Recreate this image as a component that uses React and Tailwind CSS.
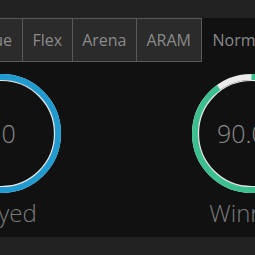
import React from 'react';

const tabs = ['Flex', 'Arena', 'ARAM'];

const stats = [
  { label: 'Played', value: '10', percent: 100, color: '#1f9bcf' },
  { label: 'Winrate', value: '90.0%', percent: 90, color: '#3cbf8e' },
];

// Ring with a thin inner line, like the stats cards
const StatRing = ({ value, percent, color }) => {
  const r = 56.5;
  const circ = 2 * Math.PI * r;
  return (
    <div className="relative w-[119px] h-[119px] flex items-center justify-center">
      <svg className="absolute inset-0" width="119" height="119" viewBox="0 0 119 119">
        <circle cx="59.5" cy="59.5" r={r} fill="none" stroke="#ececec" strokeWidth="6" />
        <circle
          cx="59.5"
          cy="59.5"
          r={r}
          fill="none"
          stroke={color}
          strokeWidth="6"
          strokeDasharray={`${(circ * percent) / 100} ${circ}`}
          transform="rotate(-90 59.5 59.5)"
        />
        <circle cx="59.5" cy="59.5" r="53" fill="none" stroke="#e6e6e6" strokeWidth="1.2" />
      </svg>
      <span className="relative text-[25px] font-light text-[#8a8a8a] leading-none">{value}</span>
    </div>
  );
};

const App = () => {
  return (
    <div className="w-full h-[255px] overflow-hidden bg-[#111111] font-['Open_Sans',sans-serif]">
      <div className="h-[18px] bg-[#222222]" />

      {/* Queue tabs */}
      <div className="flex bg-[#222222] text-[16px] text-[#8a8a8a]">
        <div className="w-[23px] h-11 shrink-0 flex justify-end items-center overflow-hidden bg-[#2b2b2b] border-y border-r border-[#5a5a5a]">
          <span className="whitespace-nowrap pr-[10px]">Solo Queue</span>
        </div>
        {tabs.map((tab) => (
          <div
            key={tab}
            className="h-11 shrink-0 flex items-center px-[9.5px] bg-[#2b2b2b] border-y border-r border-[#5a5a5a] whitespace-nowrap"
          >
            {tab}
          </div>
        ))}
        <div className="h-11 shrink-0 flex items-center px-[11px] bg-[#111111] whitespace-nowrap">Normal</div>
      </div>

      {/* Stats */}
      <div className="h-[175px] flex -ml-[123.5px] pt-3">
        {stats.map((s) => (
          <div key={s.label} className="w-[250px] shrink-0 flex flex-col items-center">
            <StatRing value={s.value} percent={s.percent} color={s.color} />
            <div className="mt-1 text-[24px] leading-8 font-light text-[#7a7a7a] whitespace-nowrap">{s.label}</div>
          </div>
        ))}
      </div>

      <div className="h-[18px] bg-[#222222]" />
    </div>
  );
};

export default App;
